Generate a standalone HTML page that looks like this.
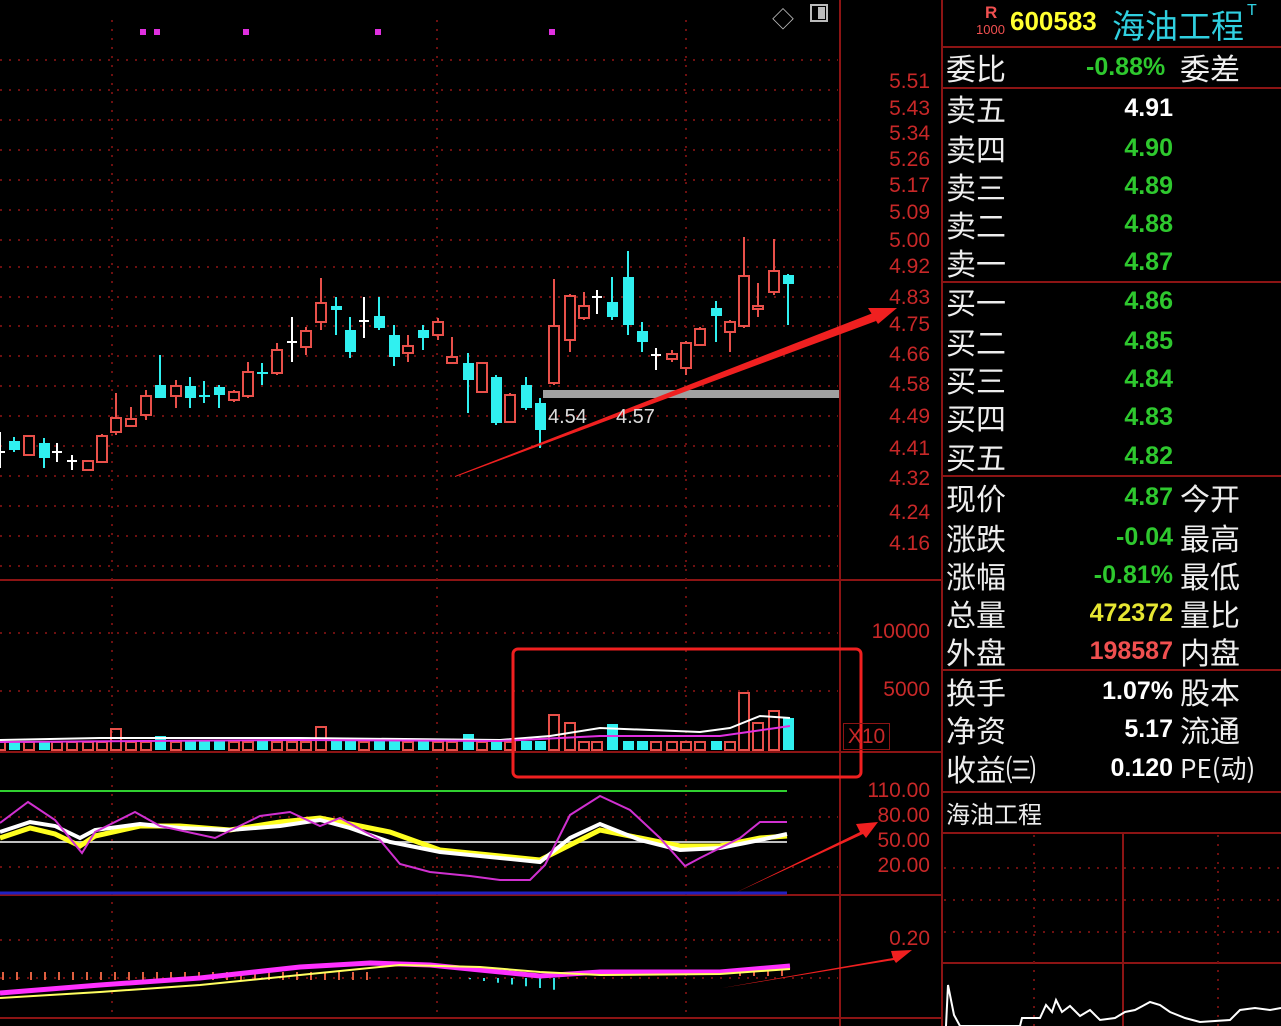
<!DOCTYPE html>
<html><head><meta charset="utf-8"><style>
body{margin:0;background:#000;width:1281px;height:1026px;overflow:hidden;position:relative;font-family:"Liberation Sans","Noto Sans CJK SC",sans-serif}
.t{position:absolute;white-space:nowrap}
.ax{position:absolute;color:#c82828;font-size:21px;left:850px;width:80px;text-align:right;font-family:"Liberation Sans",sans-serif}
.lb{position:absolute;left:946px;color:#eee;font-size:30px;font-family:"WenQuanYi Zen Hei","Noto Sans CJK SC",sans-serif;line-height:30px}
.lb2{position:absolute;left:1180px;color:#eee;font-size:30px;font-family:"WenQuanYi Zen Hei","Noto Sans CJK SC",sans-serif;line-height:30px}
.nm{position:absolute;right:108px;font-size:25px;font-weight:bold;font-family:"Liberation Sans",sans-serif;line-height:30px;text-align:right;top:0}
.g{color:#2ec82e}.w{color:#fff}.y{color:#e6e632}.r{color:#f05050}
</style></head><body>
<svg id="s" width="1281" height="1026" style="position:absolute;left:0;top:0">
<g stroke="#8c1414" stroke-width="2" fill="none">
<line x1="840" y1="0" x2="840" y2="1026"/>
<line x1="942" y1="0" x2="942" y2="1026"/>
<line x1="0" y1="580" x2="942" y2="580"/>
<line x1="0" y1="752" x2="942" y2="752"/>
<line x1="0" y1="895" x2="942" y2="895"/>
<line x1="0" y1="1018" x2="942" y2="1018"/>
<line x1="942" y1="47" x2="1281" y2="47"/>
<line x1="942" y1="88" x2="1281" y2="88"/>
<line x1="942" y1="282" x2="1281" y2="282"/>
<line x1="942" y1="476" x2="1281" y2="476"/>
<line x1="942" y1="670" x2="1281" y2="670"/>
<line x1="942" y1="792" x2="1281" y2="792"/>
<line x1="942" y1="833" x2="1281" y2="833"/>
<line x1="942" y1="963" x2="1281" y2="963"/>
<line x1="1123" y1="833" x2="1123" y2="1026"/>
</g>
<g id="grid" stroke="#6e1010" stroke-width="2" stroke-dasharray="2,7" fill="none"></g>
<g id="cg"></g>
</svg>
<div class="t" style="left:772px;top:2px;color:#bbb;font-size:22px">◇</div>
<div class="t" style="left:810px;top:4px;width:18px;height:18px;border:2px solid #bbb;box-sizing:border-box"><div style="position:absolute;right:1px;top:1px;width:7px;height:12px;background:#bbb"></div></div>

<div class="ax" style="top:70px">5.51</div><div class="ax" style="top:97px">5.43</div><div class="ax" style="top:122px">5.34</div><div class="ax" style="top:148px">5.26</div><div class="ax" style="top:174px">5.17</div><div class="ax" style="top:201px">5.09</div><div class="ax" style="top:229px">5.00</div><div class="ax" style="top:255px">4.92</div><div class="ax" style="top:286px">4.83</div><div class="ax" style="top:313px">4.75</div><div class="ax" style="top:343px">4.66</div><div class="ax" style="top:373px">4.58</div><div class="ax" style="top:405px">4.49</div><div class="ax" style="top:437px">4.41</div><div class="ax" style="top:467px">4.32</div><div class="ax" style="top:501px">4.24</div><div class="ax" style="top:532px">4.16</div>
<div class="ax" style="top:620px">10000</div><div class="ax" style="top:678px">5000</div>
<div class="t" style="left:843px;top:723px;width:45px;height:25px;border:1px solid #8c1414;color:#c82828;font-size:21px;line-height:25px;text-align:center">X10</div>
<div class="ax" style="top:779px">110.00</div><div class="ax" style="top:804px">80.00</div><div class="ax" style="top:829px">50.00</div><div class="ax" style="top:854px">20.00</div><div class="ax" style="top:927px">0.20</div>
<div class="t" style="left:548px;top:406px;color:#ddd;font-size:20px">4.54</div>
<div class="t" style="left:616px;top:406px;color:#ddd;font-size:20px">4.57</div>

<div class="t" style="left:985px;top:3px;color:#f05050;font-size:17px;font-weight:bold">R</div>
<div class="t" style="left:976px;top:22px;color:#f05050;font-size:13px">1000</div>
<div class="t" style="left:1010px;top:6px;color:#ffff30;font-size:26px;font-weight:bold">600583</div>
<div class="t" style="left:1112px;top:0px;color:#30d0e0;font-size:33px;font-family:'WenQuanYi Zen Hei','Noto Sans CJK SC',sans-serif">海油工程</div>
<div class="t" style="left:1247px;top:2px;color:#30d0e0;font-size:16px">T</div>

<div class="lb" style="top:52px">委比<span class="nm g" style="left:140px;right:auto">-0.88%</span></div><div class="lb2" style="top:52px">委差</div>
<div class="lb" style="top:93px">卖五</div><div class="nm w" style="top:93px">4.91</div>
<div class="lb" style="top:133px">卖四</div><div class="nm g" style="top:133px">4.90</div>
<div class="lb" style="top:171px">卖三</div><div class="nm g" style="top:171px">4.89</div>
<div class="lb" style="top:209px">卖二</div><div class="nm g" style="top:209px">4.88</div>
<div class="lb" style="top:247px">卖一</div><div class="nm g" style="top:247px">4.87</div>
<div class="lb" style="top:286px">买一</div><div class="nm g" style="top:286px">4.86</div>
<div class="lb" style="top:326px">买二</div><div class="nm g" style="top:326px">4.85</div>
<div class="lb" style="top:364px">买三</div><div class="nm g" style="top:364px">4.84</div>
<div class="lb" style="top:402px">买四</div><div class="nm g" style="top:402px">4.83</div>
<div class="lb" style="top:441px">买五</div><div class="nm g" style="top:441px">4.82</div>
<div class="lb" style="top:482px">现价</div><div class="nm g" style="top:482px">4.87</div><div class="lb2" style="top:482px">今开</div>
<div class="lb" style="top:522px">涨跌</div><div class="nm g" style="top:522px">-0.04</div><div class="lb2" style="top:522px">最高</div>
<div class="lb" style="top:560px">涨幅</div><div class="nm g" style="top:560px">-0.81%</div><div class="lb2" style="top:560px">最低</div>
<div class="lb" style="top:598px">总量</div><div class="nm y" style="top:598px">472372</div><div class="lb2" style="top:598px">量比</div>
<div class="lb" style="top:636px">外盘</div><div class="nm r" style="top:636px">198587</div><div class="lb2" style="top:636px">内盘</div>
<div class="lb" style="top:676px">换手</div><div class="nm w" style="top:676px">1.07%</div><div class="lb2" style="top:676px">股本</div>
<div class="lb" style="top:714px">净资</div><div class="nm w" style="top:714px">5.17</div><div class="lb2" style="top:714px">流通</div>
<div class="lb" style="top:753px">收益㈢</div><div class="nm w" style="top:753px">0.120</div><div class="lb2" style="top:753px;font-size:26px">PE(动)</div>
<div class="lb" style="top:798px;font-size:24px">海油工程</div>
<script>
(function(){
var NS="http://www.w3.org/2000/svg";
var CG=document.getElementById('cg'),GR=document.getElementById('grid');
function mk(p,t,a){var e=document.createElementNS(NS,t);for(var q in a){e.setAttribute(q,String(a[q]));}p.appendChild(e);return e;}
var gy=[60,90,120,150,180,210,240,267,297,326,356,386,416,446,476,506,536,566,633,691,817,867,940,978];
for(var i=0;i<gy.length;i++)mk(GR,'line',{x1:0,y1:gy[i],x2:838,y2:gy[i]});
var gx=[112,437,686];for(i=0;i<gx.length;i++)mk(GR,'line',{x1:gx[i],y1:20,x2:gx[i],y2:1018});
var ry=[868,900,932];for(i=0;i<ry.length;i++)mk(GR,'line',{x1:944,y1:ry[i],x2:1281,y2:ry[i]});
mk(GR,'line',{x1:1034,y1:835,x2:1034,y2:1026});mk(GR,'line',{x1:1218,y1:835,x2:1218,y2:1026});
var mx=[143,157,246,378,552];for(i=0;i<mx.length;i++)mk(CG,'rect',{x:mx[i]-3,y:29,width:6,height:6,fill:'#e030e0'});
// x, top, bottom, high, low, type 0=red 1=cyan 2=white
var K=[[0,452,454,432,468,2],[14,441,450,437,452,1],[29,436,455,436,455,0],[44,443,458,438,468,1],[57,452,454,443,462,2],[72,461,463,455,470,2],[88,461,470,461,470,0],[102,436,462,434,462,0],[116,418,432,393,435,0],[131,419,426,407,427,0],[146,396,415,390,420,0],[160,385,398,355,398,1],[176,386,396,380,408,0],[190,386,398,377,408,1],[204,395,397,381,403,1],[219,387,395,385,408,1],[234,392,400,390,402,0],[248,372,396,362,398,0],[262,372,373,363,385,1],[277,350,373,343,375,0],[292,342,344,317,362,2],[306,331,347,327,355,0],[321,303,322,278,330,0],[336,306,310,297,335,1],[350,330,352,317,358,1],[364,321,323,297,338,2],[379,316,328,297,330,1],[394,335,357,325,366,1],[408,346,353,335,362,0],[423,330,338,325,350,1],[438,322,335,318,340,0],[452,357,363,337,362,0],[468,363,380,353,413,1],[482,363,392,363,393,0],[496,377,423,375,425,1],[510,395,422,393,423,0],[526,385,408,377,410,1],[540,403,430,398,448,1],[554,326,383,279,385,0],[570,296,340,294,352,0],[584,306,318,292,320,0],[597,297,299,290,314,2],[612,302,317,277,320,1],[628,277,325,251,335,1],[642,331,342,322,352,1],[656,355,357,348,370,2],[672,354,359,350,362,0],[686,343,368,341,375,0],[700,329,345,327,346,0],[716,308,316,301,342,1],[730,322,332,320,352,0],[744,276,326,237,328,0],[758,306,309,283,317,0],[774,271,292,239,295,0],[788,275,284,274,325,1]];
var COLS=['#e8504a','#30f0f0','#ffffff'];
for(i=0;i<K.length;i++){
 var k=K[i],x=k[0],ty=k[5],cc=COLS[ty];
 mk(CG,'line',{x1:x,y1:k[3],x2:x,y2:k[4],stroke:cc,'stroke-width':2});
 if(ty===2){mk(CG,'line',{x1:x-5,y1:k[1],x2:x+5,y2:k[1],stroke:cc,'stroke-width':2});}
 else if(ty===0){mk(CG,'rect',{x:x-5,y:k[1],width:10,height:Math.max(2,k[2]-k[1]),fill:'#000',stroke:cc,'stroke-width':2});}
 else{mk(CG,'rect',{x:x-5,y:k[1],width:11,height:Math.max(2,k[2]-k[1]),fill:cc});}
 var h=9+((x*7)%7);
 var sp={554:36,570:28,744:58,774:40,758:28,788:32,627:26,612:26,321:24,116:22,160:14,468:16};
 if(sp[x])h=sp[x];
 if(ty===1){mk(CG,'rect',{x:x-5,y:750-h,width:11,height:h,fill:'#30f0f0'});}
 else{mk(CG,'rect',{x:x-5,y:751-h,width:10,height:h-1,fill:'none',stroke:'#e8504a','stroke-width':2});}
}
mk(CG,'polyline',{points:'0,740 100,738 300,738 500,740 550,736 600,728 700,732 730,728 760,716 790,718',fill:'none',stroke:'#fff','stroke-width':2});
mk(CG,'polyline',{points:'0,742 300,740 500,741 600,736 720,736 790,726',fill:'none',stroke:'#e030e0','stroke-width':2});
mk(CG,'rect',{x:543,y:390,width:296,height:8,fill:'#a0a0a0'});
mk(CG,'line',{x1:0,y1:791,x2:787,y2:791,stroke:'#30d030','stroke-width':2});
mk(CG,'line',{x1:0,y1:842,x2:787,y2:842,stroke:'#c0c0c0','stroke-width':2});
mk(CG,'line',{x1:0,y1:893,x2:787,y2:893,stroke:'#2020c0','stroke-width':3});
mk(CG,'polyline',{points:'0,838 30,828 55,834 80,846 95,836 140,826 180,826 230,830 280,822 320,818 350,824 390,832 440,850 500,856 540,860 560,850 600,830 640,838 680,846 720,846 760,838 787,836',fill:'none',stroke:'#ffff20','stroke-width':5});
mk(CG,'polyline',{points:'0,832 30,822 55,826 80,838 95,830 140,824 180,828 230,830 280,826 320,820 350,828 390,842 440,852 500,858 540,862 570,838 600,824 640,840 680,850 720,848 760,840 787,834',fill:'none',stroke:'#fff','stroke-width':4});
mk(CG,'polyline',{points:'0,823 28,802 55,820 82,853 95,832 135,812 160,826 215,838 260,816 290,812 320,826 340,818 380,840 400,864 430,872 470,876 500,880 530,880 545,865 570,815 600,796 630,810 660,838 685,866 700,858 740,838 760,822 787,822',fill:'none',stroke:'#d030d0','stroke-width':2});
for(var xx=3;xx<380;xx+=14)mk(CG,'line',{x1:xx,y1:972,x2:xx,y2:980,stroke:'#e06040','stroke-width':2});
for(xx=470;xx<560;xx+=14)mk(CG,'line',{x1:xx,y1:978,x2:xx,y2:978+(xx-460)/8,stroke:'#30e0e0','stroke-width':2});
for(xx=740;xx<790;xx+=14)mk(CG,'line',{x1:xx,y1:970,x2:xx,y2:976,stroke:'#e06040','stroke-width':2});
mk(CG,'polyline',{points:'0,993 100,985 200,978 300,967 370,963 430,965 480,970 540,976 600,972 660,972 720,972 790,966',fill:'none',stroke:'#ff30ff','stroke-width':5});
mk(CG,'polyline',{points:'0,998 100,992 200,985 300,975 400,965 480,967 540,972 600,975 720,974 790,969',fill:'none',stroke:'#ffff60','stroke-width':2});
mk(CG,'polyline',{points:'946,1026 948,985 951,1000 954,1015 960,1026 1020,1026 1022,1018 1040,1018 1046,1005 1052,1012 1056,1000 1062,1012 1070,1006 1080,1016 1090,1010 1100,1020 1115,1018 1125,1012 1135,1010 1150,1002 1160,1005 1170,1012 1185,1018 1200,1022 1230,1020 1240,1010 1255,1008 1270,1010 1281,1008',fill:'none',stroke:'#fff','stroke-width':2});
mk(CG,'polygon',{points:'455,476 455,477 876,321 873,313',fill:'#f02020'});
mk(CG,'polygon',{points:'897,308 868,308 878,324',fill:'#f02020'});
mk(CG,'rect',{x:513,y:649,width:348,height:128,rx:5,fill:'none',stroke:'#f02020','stroke-width':3});
mk(CG,'polygon',{points:'735,893 860,832 856,824 878,822 866,838 863,834',fill:'#f02020'});
mk(CG,'polygon',{points:'722,988 893,958 891,951 912,950 896,963 894,960',fill:'#f02020'});
})();
</script>
</body></html>
